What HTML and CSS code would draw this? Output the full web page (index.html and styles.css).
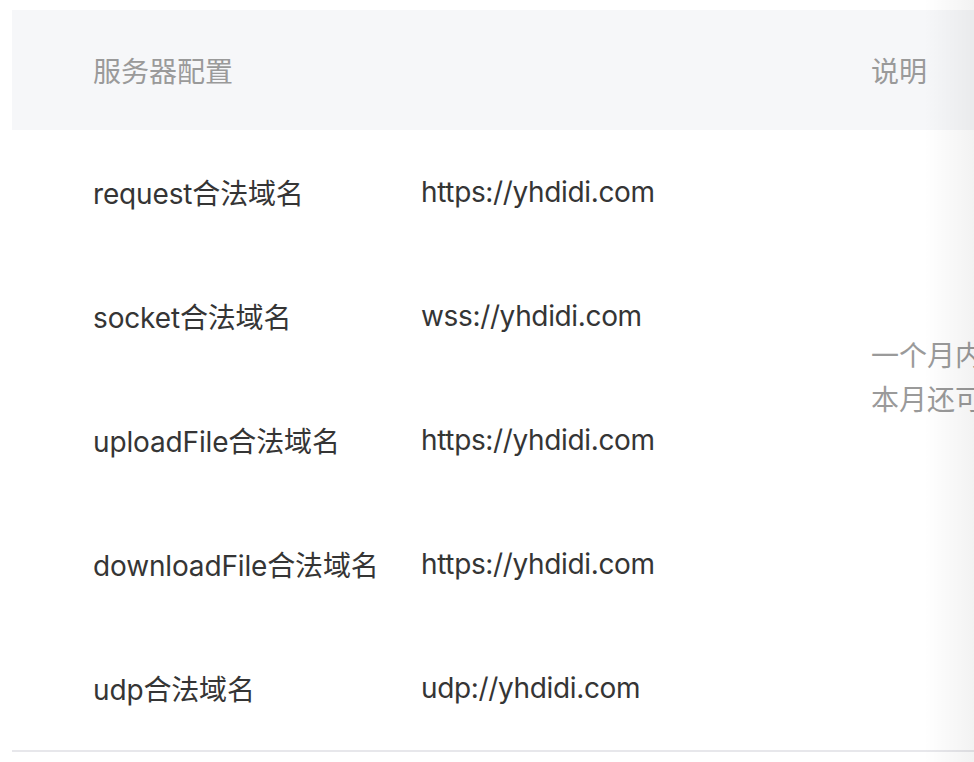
FILE: index.html
```html
<!DOCTYPE html>
<html lang="zh-CN">
<head>
    <meta charset="UTF-8">
    <meta name="viewport" content="width=device-width, initial-scale=1.0">
    <title>服务器域名</title>
    <link rel="stylesheet" href="styles.css">
</head>
<body>
    <div class="page">
        <div class="table">
            <!-- Header -->
            <div class="th">服务器配置</div>
            <div class="th"></div>
            <div class="th">说明</div>

            <!-- Rows -->
            <div class="td">request合法域名</div>
            <div class="td url">https://yhdidi.com</div>
            <div class="td note">
                <p>一个月内可申请5次修改</p>
                <p>本月还可修改5次</p>
            </div>

            <div class="td">socket合法域名</div>
            <div class="td url">wss://yhdidi.com</div>

            <div class="td">uploadFile合法域名</div>
            <div class="td url">https://yhdidi.com</div>

            <div class="td">downloadFile合法域名</div>
            <div class="td url">https://yhdidi.com</div>

            <div class="td">udp合法域名</div>
            <div class="td url">udp://yhdidi.com</div>
        </div>
        <div class="edge-shadow"></div>
    </div>
</body>
</html>
```

FILE: styles.css
```css
* {
    margin: 0;
    padding: 0;
    box-sizing: border-box;
}

html, body {
    overflow: hidden;
}

body {
    background: #fff;
    font-family: Inter, "Noto Sans CJK SC", sans-serif;
    font-size: 28px;
    color: #353535;
}

.page {
    position: relative;
    height: 762px;
    padding: 10px 0 0 12px;
}

.table {
    width: 1300px;
    display: grid;
    grid-template-columns: 328px 450px 1fr;
    grid-template-rows: 120px repeat(5, 124px);
    border-bottom: 2px solid #e7e7eb;
}

.th {
    background: #f6f7f9;
    color: #9a9a9a;
    display: flex;
    align-items: center;
    padding-left: 81px;
}

.td {
    display: flex;
    align-items: center;
    padding-left: 81px;
    white-space: nowrap;
    letter-spacing: -0.15px;
}

.url {
    letter-spacing: -0.35px;
}

.note {
    grid-column: 3;
    grid-row: 2 / span 5;
    flex-direction: column;
    justify-content: center;
    align-items: flex-start;
    padding-bottom: 124px;
    color: #9a9a9a;
    line-height: 44px;
    letter-spacing: 0;
}

.edge-shadow {
    position: absolute;
    top: 0;
    right: 0;
    width: 50px;
    height: 100%;
    background: linear-gradient(to right, rgba(0, 0, 0, 0), rgba(0, 0, 0, 0.05));
    pointer-events: none;
}
```
